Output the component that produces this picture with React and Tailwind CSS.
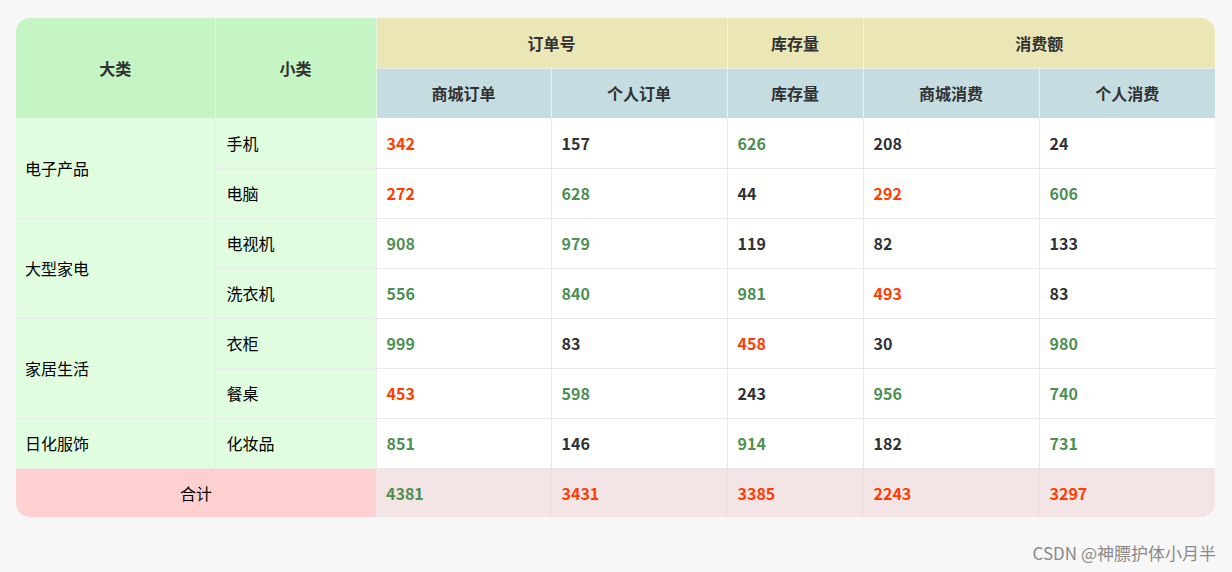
const R = "text-[#ff3d00]", G = "text-[#4e8f52]", K = "text-[#303133]";
const rows = [
  ["电子产品", "手机", [[342, R], [157, K], [626, G], [208, K], [24, K]], 2],
  [null, "电脑", [[272, R], [628, G], [44, K], [292, R], [606, G]]],
  ["大型家电", "电视机", [[908, G], [979, G], [119, K], [82, K], [133, K]], 2],
  [null, "洗衣机", [[556, G], [840, G], [981, G], [493, R], [83, K]]],
  ["家居生活", "衣柜", [[999, G], [83, K], [458, R], [30, K], [980, G]], 2],
  [null, "餐桌", [[453, R], [598, G], [243, K], [956, G], [740, G]]],
  ["日化服饰", "化妆品", [[851, G], [146, K], [914, G], [182, K], [731, G]], 1],
];
const totals = [[4381, G], [3431, R], [3385, R], [2243, R], [3297, R]];

export default function App() {
  return (
    <div className="w-[1232px] h-[572px] bg-[#f7f7f7] relative pt-[18px] px-[16px]" style={{ fontFamily: '"Noto Sans CJK SC", sans-serif' }}>
      <div className="w-[1199px] rounded-[14px] overflow-hidden bg-white">
        <table className="w-full border-collapse table-fixed text-[16px] text-[#303133]">
          <colgroup>
            <col className="w-[199px]" /><col className="w-[161px]" /><col className="w-[175px]" />
            <col className="w-[176px]" /><col className="w-[136px]" /><col className="w-[176px]" /><col className="w-[176px]" />
          </colgroup>
          <thead className="font-bold">
            <tr className="h-[50px]">
              <th rowSpan={2} className="bg-[#c5f4c5] border-r border-[#e4f7e4]">大类</th>
              <th rowSpan={2} className="bg-[#c5f4c5] border-r border-[#e4f7e4]">小类</th>
              <th colSpan={2} className="bg-[#ebe6b5] border-r border-[#f0f0d8]">订单号</th>
              <th className="bg-[#ebe6b5] border-r border-[#f0f0d8]">库存量</th>
              <th colSpan={2} className="bg-[#ebe6b5]">消费额</th>
            </tr>
            <tr className="h-[50px]">
              {["商城订单", "个人订单", "库存量", "商城消费", "个人消费"].map((t, i) => (
                <th key={i} className={`bg-[#c5dde0] border-t border-[#e8eef0] ${i < 4 ? "border-r" : ""}`}>{t}</th>
              ))}
            </tr>
          </thead>
          <tbody>
            {rows.map(([big, small, vals, span], i) => (
              <tr key={i} className="h-[50px]">
                {big && <td rowSpan={span} className="bg-[#e0fde0] border-b border-r border-[#e8ece8] px-[9px] text-black">{big}</td>}
                <td className="bg-[#e0fde0] border-b border-r border-[#e8ece8] px-[11px] text-black">{small}</td>
                {vals.map(([v, c], j) => (
                  <td key={j} className={`border-b border-[#e8e8e8] px-[10px] font-bold ${c} ${j < 4 ? "border-r" : ""}`}>{v}</td>
                ))}
              </tr>
            ))}
            <tr className="h-[49px]">
              <td colSpan={2} className="bg-[#ffd0d0] text-center text-black">合计</td>
              {totals.map(([v, c], j) => (
                <td key={j} className={`bg-[#f3e5e5] px-[10px] font-bold ${c} ${j < 4 ? "border-r border-[#ecdede]" : ""}`}>{v}</td>
              ))}
            </tr>
          </tbody>
        </table>
      </div>
      <div className="absolute right-[16px] bottom-[7px] text-[17px] text-[#8a8a8a]">CSDN @神膘护体小月半</div>
    </div>
  );
}
